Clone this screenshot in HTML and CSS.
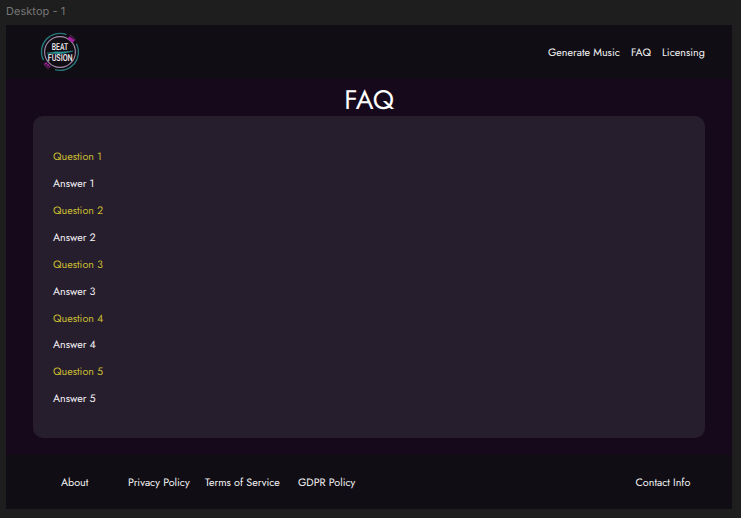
FILE: index.html
```html
<!DOCTYPE html>
<html lang="en">
<head>
<meta charset="utf-8">
<title>Beat Fusion FAQ</title>
<link rel="stylesheet" href="styles.css">
</head>
<body>
<div class="frame-label">Desktop - 1</div>
<div class="page">
  <header class="header">
    <svg class="logo" viewBox="0 0 40 40" aria-label="Beat Fusion">
      <g fill="none">
        <path d="M26.5 2.7A18.4 18.4 0 0 0 3.5 28.3M15 37.7A18.4 18.4 0 0 0 36.5 11.7" stroke="#28777d" stroke-width="1.3"/>
        <circle cx="20" cy="20" r="15.4" stroke="#a78cac" stroke-width="1.1"/>
        <path d="M28.5 5.5L33.8 9.5" stroke="#a51d9f" stroke-width="3.4"/>
        <path d="M5.2 30.8L10 35.2" stroke="#a51d9f" stroke-width="2.4" stroke-dasharray="2 .7"/>
        <path d="M29.5 2.8q4.2 2.2 6 5.4M3.6 31.6q2 3.4 5 5.4" stroke="#79347c" stroke-width=".8"/>
      </g>
      <path d="M7 21.2l9-1.4 5 .2 12-.8-8 1.8-6 .9-5-.5z" fill="#2b9294" stroke="#2b9294" stroke-width=".5"/>
      <text class="logo-text" x="20" y="17.6" textLength="16.5" lengthAdjust="spacingAndGlyphs">BEAT</text>
      <text class="logo-text" x="20.2" y="29.4" textLength="25" lengthAdjust="spacingAndGlyphs">FUSION</text>
    </svg>
    <nav class="nav">
      <a class="generate">Generate Music</a>
      <a class="faq-link">FAQ</a>
      <a class="licensing">Licensing</a>
    </nav>
  </header>
  <main class="main">
    <h1 class="title">FAQ</h1>
    <dl class="panel">
      <dt>Question 1</dt><dd>Answer 1</dd>
      <dt>Question 2</dt><dd>Answer 2</dd>
      <dt>Question 3</dt><dd>Answer 3</dd>
      <dt>Question 4</dt><dd>Answer 4</dd>
      <dt>Question 5</dt><dd>Answer 5</dd>
    </dl>
  </main>
  <footer class="footer">
    <a class="about">About</a>
    <a class="privacy">Privacy Policy</a>
    <a class="terms">Terms of Service</a>
    <a class="gdpr">GDPR Policy</a>
    <a class="contact">Contact Info</a>
  </footer>
</div>
</body>
</html>
```
FILE: styles.css
```css
* { box-sizing: border-box; }
body {
  margin: 0;
  height: 518px;
  overflow: hidden;
  background: #1e1e1e;
  color: #f4f3f5;
  font: 10.75px/16px Jost, Lato, sans-serif;
  text-rendering: geometricPrecision;
}
.frame-label {
  height: 25px;
  padding: 3px 0 0 6px;
  color: #777;
  font: 11px/16px Inter, sans-serif;
  letter-spacing: .04px;
}
.page {
  display: flex;
  flex-direction: column;
  width: 726px;
  height: 484px;
  margin-left: 6px;
  background: #16091c;
}
.header {
  display: flex;
  flex: 0 0 54px;
  align-items: center;
  justify-content: space-between;
  padding: 0 27px 0 34px;
  background: #100e14;
}
.logo { width: 40px; height: 40px; overflow: visible; }
.logo-text {
  fill: #f2edf4;
  font: 500 9.6px Roboto, sans-serif;
  text-anchor: middle;
}
.nav { display: flex; gap: 11px; padding-top: 2px; }
.nav a, .footer a { white-space: nowrap; }
.generate { width: 72px; }
.faq-link { width: 20px; }
.licensing { width: 43px; }
.main { flex: 1; padding: 0 27px; }
.title {
  height: 37px;
  margin: 0;
  color: #fff;
  font: 400 26.9px/43px Jost, Lato, sans-serif;
  text-align: center;
}
.panel {
  display: grid;
  grid-template-rows: repeat(10, 26.87px);
  align-items: center;
  height: 322px;
  margin: 0;
  padding: 28px 20px 0;
  border-radius: 10px;
  background: #261d2d;
}
dt { color: #c9bd32; }
dd { margin: 0; }
.footer {
  display: flex;
  flex: 0 0 54px;
  align-items: center;
  padding: 2px 41px 0 55px;
  background: #100e14;
}
.about { width: 67px; }
.privacy { width: 77px; }
.terms { width: 93px; }
.gdpr { width: 58px; }
.contact { width: 55.5px; margin-left: auto; }
```
